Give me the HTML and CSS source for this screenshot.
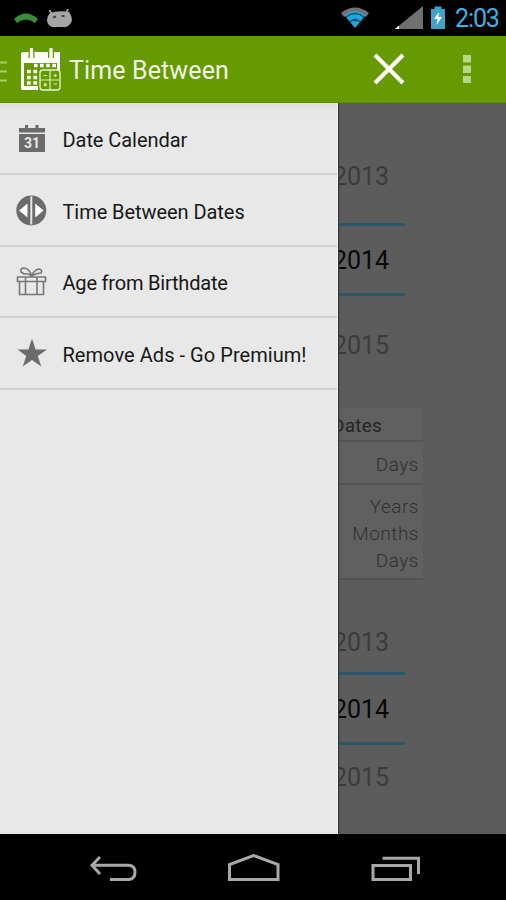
FILE: index.html
```html
<!DOCTYPE html>
<html lang="en">
<head>
<meta charset="utf-8">
<title>Time Between</title>
<link rel="stylesheet" href="styles.css">
</head>
<body>
<div class="phone">
  <div class="status">
    <svg class="status-left" width="80" height="36" viewBox="0 0 80 36">
      <path d="M14 19Q26 8 38 19L35 23Q26 16 17 23Z" fill="#3b8c38"/>
      <path d="M49.500 10L52.500 15M68 9L66 14" stroke="#a6a6a6" stroke-width="1.800"/>
      <path d="M50 13Q59 10 69 12Q72 16 72 20Q71 25 66 27H52Q47 25 47 20Q47 16 50 13Z" fill="#a6a6a6"/>
      <path d="M53 17.500L56 16.500M61.500 16H64.500" stroke="#444" stroke-width="2"/>
    </svg>
    <svg class="status-right" width="116" height="36" viewBox="0 0 116 36">
      <path d="M1 13Q15 2 29 13L26 17Q15 8 4 17Z" fill="#747474"/>
      <path d="M4.500 15.500Q15 7 25.500 15.500L15 28Z" fill="#24a5dd"/>
      <path d="M6 17Q15 10 24 17M10 22Q15 17 20 22" fill="none" stroke="#104d68" stroke-width="1.300"/>
      <circle cx="15" cy="20" r="1.500" fill="#104d68"/>
      <path d="M55 29L83 6V29Z" fill="#707070"/>
      <path d="M55 29L59 25.500V29Z" fill="#fff"/>
      <path d="M91 9H94.500V6.500H101.500V9H105V29H91Z" fill="#3fa3c8"/>
      <path d="M99 12L94 19H97.500L96.500 25L102 17H98.500Z" fill="#fff"/>
    </svg>
    <span class="clock">2:03</span>
  </div>
  <header class="bar">
    <svg class="lines" width="8" height="24" viewBox="0 0 8 24"><path d="M0 3.500H7M0 12.500H7M0 21.500H7" stroke="#a9cd6c" stroke-width="2.200"/></svg>
    <svg class="logo" width="42" height="44" viewBox="0 0 42 44">
      <path d="M1 6Q1 4 3 4H40V22H37V15H4V38H18V42H3Q1 42 1 40Z" fill="#fff"/>
      <path d="M11.500 0V10M31 0V10" stroke="#659a00" stroke-width="6"/>
      <path d="M11.500 1.500V10M31 1.500V10" stroke="#fff" stroke-width="3.400" stroke-linecap="round"/>
      <path d="M14 17.500H37" stroke="#fff" stroke-width="3.400" stroke-dasharray="3.600 2.500"/>
      <path d="M7 23.500H18M7 29.500H18M7 35H18" stroke="#fff" stroke-width="3.600" stroke-dasharray="3.700 2.700"/>
      <rect x="20" y="22" width="20" height="20" rx="3" fill="#659a00" stroke="#e8f3d3" stroke-width="1.300"/>
      <path d="M30 22V42M20 32H40M23.500 27.500H27M33.500 27.500H37M35.200 26V29M24 35.500L26.500 38M26.500 35.500L24 38M33.500 36H37" stroke="#dcecc0" stroke-width="1.200"/>
    </svg>
    <h1 class="title">Time Between</h1>
    <svg class="close" width="34" height="34" viewBox="0 0 34 34"><path d="M3 3L31 31M31 3L3 31" stroke="#fff" stroke-width="4.200"/></svg>
    <svg class="more" width="8" height="30" viewBox="0 0 8 30"><path d="M0 1H8V8.500H0ZM0 11.500H8V19H0ZM0 22H8V29H0Z" fill="#b8d786"/></svg>
  </header>
  <main class="content">
    <section class="picker tall">
      <span class="year">2013</span>
      <span class="year current">2014</span>
      <span class="year">2015</span>
    </section>
    <section class="card">
      <div class="card-head">Time Between Dates</div>
      <div class="card-row">Days</div>
      <div class="card-row last"><span>Years</span><span>Months</span><span>Days</span></div>
    </section>
    <section class="picker short">
      <span class="year">2013</span>
      <span class="year current">2014</span>
      <span class="year">2015</span>
    </section>
    <nav class="drawer">
      <a class="item">
        <svg class="icon" width="32" height="32" viewBox="0 0 32 32">
          <path d="M3 5H29V9.500H3ZM3 11H29V29H3Z" fill="#6b6b6b"/><path d="M10.500 2V6M21 2V6" stroke="#6b6b6b" stroke-width="3"/>
          <text class="day" x="16" y="25" text-anchor="middle">31</text>
        </svg>
        <span class="label">Date Calendar</span>
      </a>
      <a class="item">
        <svg class="icon" width="32" height="32" viewBox="0 0 32 32">
          <circle cx="15.300" cy="15.500" r="15" fill="#6b6b6b"/><path d="M15.300 1.500V29.500" stroke="#e8e8e8" stroke-width="2"/>
          <path d="M3 15.500L11.500 8.500V22.500ZM27.600 15.500L19.200 8.500V22.500Z" fill="#fff"/>
        </svg>
        <span class="label">Time Between Dates</span>
      </a>
      <a class="item">
        <svg class="icon" width="32" height="32" viewBox="0 0 32 32" fill="none" stroke="#777" stroke-width="1.600">
          <path d="M1.500 11H29.500V15.500H1.500ZM3.500 15.500V28.500H27.500V15.500M9.500 11V28.500M21 11V28.500"/>
          <path d="M15.500 10Q14 3 8 2Q4 2 5 6L8 8Q12 7 15.500 10Q18 4 23 3Q27 4 25 7Q20 7 15.500 10"/>
        </svg>
        <span class="label birth">Age from Birthdate</span>
      </a>
      <a class="item">
        <svg class="icon" width="32" height="32" viewBox="0 0 32 32"><path d="M16 .5L19.600 11.500H31L21.700 18L25.300 28.500L16 22L6.700 28.500L10.300 18L1.500 11.500H12.400Z" fill="#6b6b6b"/></svg>
        <span class="label premium">Remove Ads - Go Premium!</span>
      </a>
    </nav>
  </main>
  <footer class="navbar">
    <svg width="506" height="66" viewBox="0 0 506 66" fill="none" stroke="#a8a8a8" stroke-width="3">
      <path d="M100 23L92 31.300L100 40M92 31.300H129Q135 32 135 38Q135 45 129 45.500H110"/>
      <path d="M229.500 45.500V30.500L253.500 21.500L278 30.500V45.500Z"/>
      <path d="M373 31.500H410.500V45.500H373ZM382.500 24.200H418.500V40"/>
    </svg>
  </footer>
</div>
</body>
</html>
```

FILE: styles.css
```css
* { box-sizing: border-box; }
body { margin: 0; background: #000; font-family: Roboto, "Liberation Sans", sans-serif; }
.phone { width: 506px; height: 900px; display: flex; flex-direction: column; overflow: hidden; }
svg { display: block; flex: none; }
.status { height: 36px; background: #000; display: flex; align-items: center; flex: none; }
.status-right { margin-left: 260px; }
.clock { margin-left: -1px; padding-top: 2px; color: #3eb3e2; font-size: 25px; line-height: 34px; letter-spacing: -1.1px; white-space: nowrap; }
.bar { height: 67px; background: #659a00; display: flex; align-items: center; flex: none; border-bottom: 1px solid #5d8b08; }
.lines { margin-top: 3px; }
.logo { margin: 2px 0 0 12px; }
.title { margin: 0 0 0 7px; padding-top: 3px; width: 303px; color: #f0f7e4; font-weight: 400; font-size: 25px; line-height: 30px; letter-spacing: .12px; white-space: nowrap; }
.close { margin-right: 57px; }
.content { position: relative; height: 731px; background: #5c5c5c; flex: none; display: flex; flex-direction: column; overflow: hidden; }
.picker { width: 88px; margin-left: 317px; display: flex; flex-direction: column; align-items: stretch; flex: none; }
.year { text-align: center; font-size: 25px; color: #3b3b3b; flex: none; }
.current { height: 73px; line-height: 70px; color: #080808; border: solid #28566a; border-width: 3px 0; }
.tall { margin-top: 24px; height: 281px; }
.tall .year:not(.current) { height: 96px; line-height: 100px; }
.short { margin-top: 32px; }
.short .year:not(.current) { height: 60px; line-height: 62px; }
.short .year:last-child { line-height: 66px; }
.card { width: 340px; margin-left: 83px; height: 172px; flex: none; font-size: 19px; letter-spacing: .5px; color: #303030; background: #606060; border-bottom: 2px solid #515151; font-weight: 300; }
.card-head { height: 34px; line-height: 35px; padding-right: 41px; text-align: right; color: #242424; border-bottom: 2px solid #555; font-weight: 400; letter-spacing: .2px; }
.card-row { height: 43px; line-height: 45px; padding-right: 4px; text-align: right; border-bottom: 2px solid #535353; }
.card-row.last { height: 93px; padding-top: 8px; line-height: 27px; display: flex; flex-direction: column; border-bottom: 0; }
.drawer { position: absolute; left: 0; top: 0; width: 338px; height: 731px; background: linear-gradient(#dedede, #e8e8e8 10px); border-right: 1px solid #f4f4f4; box-shadow: 1px 0 1px #333; }
.item { height: 71.75px; display: flex; align-items: center; border-bottom: 2px solid #d0d0d0; }
.icon { margin: 2px 0 0 16px; }
.label { margin-left: 14.5px; padding-top: 4px; font-size: 20px; line-height: 26px; color: #171717; white-space: nowrap; letter-spacing: -.06px; }
.birth { letter-spacing: -.2px; }
.premium { letter-spacing: .05px; }
.day { fill: #e8e8e8; font-size: 14px; font-weight: 700; }
.navbar { height: 66px; background: #000; flex: none; }
```
